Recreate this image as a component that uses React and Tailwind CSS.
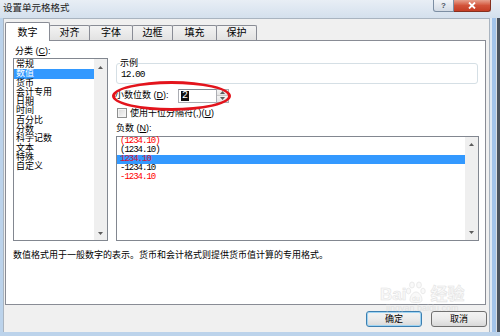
const font = "font-['Liberation_Sans','Noto_Sans_CJK_SC',sans-serif]";

const categories = ['常规', '数值', '货币', '会计专用', '日期', '时间', '百分比', '分数', '科学记数', '文本', '特殊', '自定义'];

const negatives = [
  { text: '(1234.10)', red: true },
  { text: '(1234.10)', red: false },
  { text: '1234.10', red: true, selected: true },
  { text: '-1234.10', red: false },
  { text: '-1234.10', red: true },
];

const tabs = [
  { label: '数字', w: 'w-[45px]' },
  { label: '对齐', w: 'w-[41px]' },
  { label: '字体', w: 'w-[44px]' },
  { label: '边框', w: 'w-[41px]' },
  { label: '填充', w: 'w-[45px]' },
  { label: '保护', w: 'w-[41px]' },
];

function Tri({ down }) {
  return (
    <svg width="5" height="3" viewBox="0 0 5 3" className="fill-[#5c5c5c]">
      <path d={down ? 'M0 0h5L2.5 3z' : 'M0 3h5L2.5 0z'} />
    </svg>
  );
}

function Scrollbar({ top = 'pt-[7px]', bottom = 'pb-[6px]' }) {
  return (
    <div className={`w-[13px] h-full bg-[#efefef] flex flex-col justify-between items-center ${top} ${bottom}`}>
      <Tri />
      <Tri down />
    </div>
  );
}

function Button({ children, primary }) {
  return (
    <div
      className={`w-[56px] h-[16px] rounded-[3px] border flex items-center justify-center text-[9px] leading-none bg-gradient-to-b from-[#f3f3f3] via-[#ebebeb] to-[#d8d8d8] ${
        primary ? 'border-[#3c7fb1] shadow-[inset_0_0_0_1px_#9fd4f3]' : 'border-[#707070]'
      }`}
    >
      {children}
    </div>
  );
}

export default function App() {
  return (
    <div className={`relative w-[500px] h-[336px] overflow-hidden flex flex-col bg-[#bcd3eb] text-[9px] text-black ${font}`}>
      {/* title bar */}
      <div className="h-[18px] flex items-start bg-[linear-gradient(to_bottom,#e8eef5,#d4e0ed)]">
        <span className="pl-[3px] pt-[2px] text-[9.5px] leading-[11px] text-[#1b1b1b]">设置单元格格式</span>
        <div className="ml-auto mr-[9px] flex h-[12px]">
          <div className="w-[21px] h-full border border-t-0 border-[#7c8ea3] rounded-bl-[3px] bg-gradient-to-b from-[#f1f4f8] to-[#d3dbe5] flex items-center justify-center text-[8px] leading-none font-bold text-[#4a5360]">
            ?
          </div>
          <div className="w-[37px] h-full border border-t-0 border-l-0 border-[#86301f] rounded-br-[3px] bg-gradient-to-b from-[#e6a08d] via-[#d2533a] to-[#c53d24] flex items-center justify-center">
            <svg width="8" height="7" viewBox="0 0 8 7">
              <path d="M1 0.5l6 6M7 0.5l-6 6" stroke="white" strokeWidth="1.8" />
            </svg>
          </div>
        </div>
      </div>

      <div className="flex flex-1">
        <div className="w-[3px] bg-[#bcd3eb]" />

        {/* dialog client area */}
        <div className="w-[487px] bg-[#f0f0f0] border-l border-t border-r border-[#a9b4c0] flex flex-col pt-[3px]">
          {/* tabs */}
          <div className="h-[18px] flex items-end pl-[1px]">
            {tabs.map((t, i) =>
              i === 0 ? (
                <div
                  key={t.label}
                  className={`${t.w} h-[19px] relative z-10 -mb-[1px] bg-white border border-b-0 border-[#898c95] rounded-t-[2px] flex items-center justify-center pt-[2px] text-[10px] leading-none`}
                >
                  {t.label}
                </div>
              ) : (
                <div
                  key={t.label}
                  className={`${t.w} h-[15px] -ml-[1px] border border-b-0 border-[#898c95] rounded-t-[2px] bg-gradient-to-b from-[#f3f3f3] to-[#e2e2e2] flex items-center justify-center text-[10px] leading-none`}
                >
                  {t.label}
                </div>
              )
            )}
          </div>

          {/* tab panel */}
          <div className="ml-[1px] w-[481px] h-[265px] border border-[#898c95] bg-white flex flex-col">
            <div className="flex pl-[7px] pt-[5px]">
              {/* category */}
              <div className="w-[95px] flex flex-col">
                <div className="h-[10px] leading-[10px] pl-[2px]">
                  分类 (<span className="underline">C</span>):
                </div>
                <div className="mt-[2px] h-[183px] border border-[#828790] flex">
                  <div className="flex-1 pt-[1px]">
                    {categories.map((c, i) => (
                      <div
                        key={c}
                        className={`h-[9.3px] leading-[9.3px] pl-[2px] whitespace-nowrap ${
                          i === 1 ? 'bg-[#3399ff] text-white' : ''
                        }`}
                      >
                        {c}
                      </div>
                    ))}
                  </div>
                  <Scrollbar top="pt-[7px]" bottom="pb-[5px]" />
                </div>
              </div>

              {/* right side */}
              <div className="ml-[8px] w-[363px] pt-[12px] flex flex-col">
                <fieldset className="w-[362px] border border-[#d5dfe5] rounded-[3px] px-[3px]">
                  <legend className="text-[9px] leading-[10px]">示例</legend>
                  <div className="pt-[2px] pb-[3px] h-[15px] leading-[10px] font-['Liberation_Mono',monospace] text-[9.5px] tracking-[-1px] pl-[1px]">
                    12.00
                  </div>
                </fieldset>

                <div className="mt-[4px] h-[15px] flex items-center">
                  <div className="-ml-[1px] w-[63px] leading-[10px] -mt-[2px]">
                    小数位数 (<span className="underline">D</span>):
                  </div>
                  <div className="w-[39px] h-[14px] border border-[#abadb3] border-t-[#828790] bg-white flex items-center pl-[2px]">
                    <span className="bg-[#111] text-white leading-[10px] px-[1px] font-['Liberation_Mono',monospace] text-[10px]">2</span>
                  </div>
                  <div className="w-[12px] h-[14px] border border-l-0 border-[#abadb3] flex flex-col">
                    <div className="flex-1 flex items-center justify-center bg-gradient-to-b from-[#f4f4f4] to-[#e4e4e4] border-b border-[#c9c9c9]">
                      <Tri />
                    </div>
                    <div className="flex-1 flex items-center justify-center bg-gradient-to-b from-[#f4f4f4] to-[#e4e4e4]">
                      <Tri down />
                    </div>
                  </div>
                </div>

                <div className="mt-[4px] h-[11px] flex items-center">
                  <div className="ml-[1px] w-[10px] h-[10px] border border-[#8e8f8f] bg-gradient-to-br from-[#d8d8d8] to-[#fafafa] shadow-[inset_0_0_0_1px_#f4f4f4]" />
                  <span className="ml-[3px] leading-[10px]">
                    使用千位分隔符(,)(<span className="underline">U</span>)
                  </span>
                </div>

                <div className="mt-[5px] h-[10px] leading-[10px]">
                  负数 (<span className="underline">N</span>):
                </div>

                <div className="mt-[3px] h-[105px] w-[363px] border border-[#828790] flex">
                  <div className="flex-1 font-['Liberation_Mono',monospace] text-[9px] tracking-[-1px]">
                    {negatives.map((n, i) => (
                      <div
                        key={i}
                        className={`h-[9px] leading-[9px] pl-[3px] ${n.selected ? 'bg-[#3399ff]' : ''} ${
                          n.red ? (n.selected ? 'text-[#d4143a]' : 'text-[#ff0000]') : 'text-black'
                        }`}
                      >
                        {n.text}
                      </div>
                    ))}
                  </div>
                  <Scrollbar top="pt-[6px]" bottom="pb-[6px]" />
                </div>
              </div>
            </div>

            <div className="mt-[9px] pl-[7px] h-[10px] leading-[10px] whitespace-nowrap">
              数值格式用于一般数字的表示。货币和会计格式则提供货币值计算的专用格式。
            </div>
          </div>

          {/* buttons */}
          <div className="mt-[6px] flex justify-end gap-[9px] pr-[2px]">
            <Button primary>确定</Button>
            <Button>取消</Button>
          </div>
        </div>

        <div className="w-[10px] flex">
          <div className="w-[2px] bg-[#dfe9f4]" />
          <div className="w-[4px] bg-[#a3c4ea]" />
          <div className="w-[1px] bg-[#d9dde2]" />
          <div className="w-[3px] bg-[#4a535e]" />
        </div>
      </div>

      <div className="h-[4px] bg-[#bcd3eb]" />

      {/* annotation ellipse */}
      <div className="absolute left-[112px] top-[81px] w-[119px] h-[30px] rounded-[50%] border-[3px] border-[#e3141c]" />

      {/* watermark */}
      <div className="absolute left-[380px] top-[281px] flex flex-col items-center opacity-50 pointer-events-none">
        <div className="flex items-end">
          <span className="text-[17px] leading-[17px] font-bold text-[#f4f4f4] [-webkit-text-stroke:0.6px_#c9c9c9] font-['Liberation_Sans',sans-serif]">
            Bai
          </span>
          <svg width="22" height="22" viewBox="0 0 22 22" className="fill-[#f4f4f4] stroke-[#c9c9c9]" strokeWidth="0.7">
            <ellipse cx="6" cy="4" rx="2.4" ry="3" />
            <ellipse cx="13" cy="4" rx="2.4" ry="3" />
            <ellipse cx="2.5" cy="10" rx="2.2" ry="2.8" />
            <ellipse cx="17" cy="10" rx="2.2" ry="2.8" />
            <path d="M4 19c0-4 3-8 6-8s6 4 6 8c0 2-2 2.5-6 2.5S4 21 4 19z" />
            <text x="6" y="20" fontSize="7" className="fill-[#c9c9c9] stroke-none" fontFamily="Liberation Sans">du</text>
          </svg>
          <span className="ml-[2px] text-[17px] leading-[17px] font-bold text-[#f4f4f4] [-webkit-text-stroke:0.6px_#c9c9c9]">经验</span>
        </div>
        <span className="text-[9px] leading-[10px] text-[#d4d4d4] font-['Liberation_Sans',sans-serif]">jingyan.baidu.com</span>
      </div>
    </div>
  );
}
